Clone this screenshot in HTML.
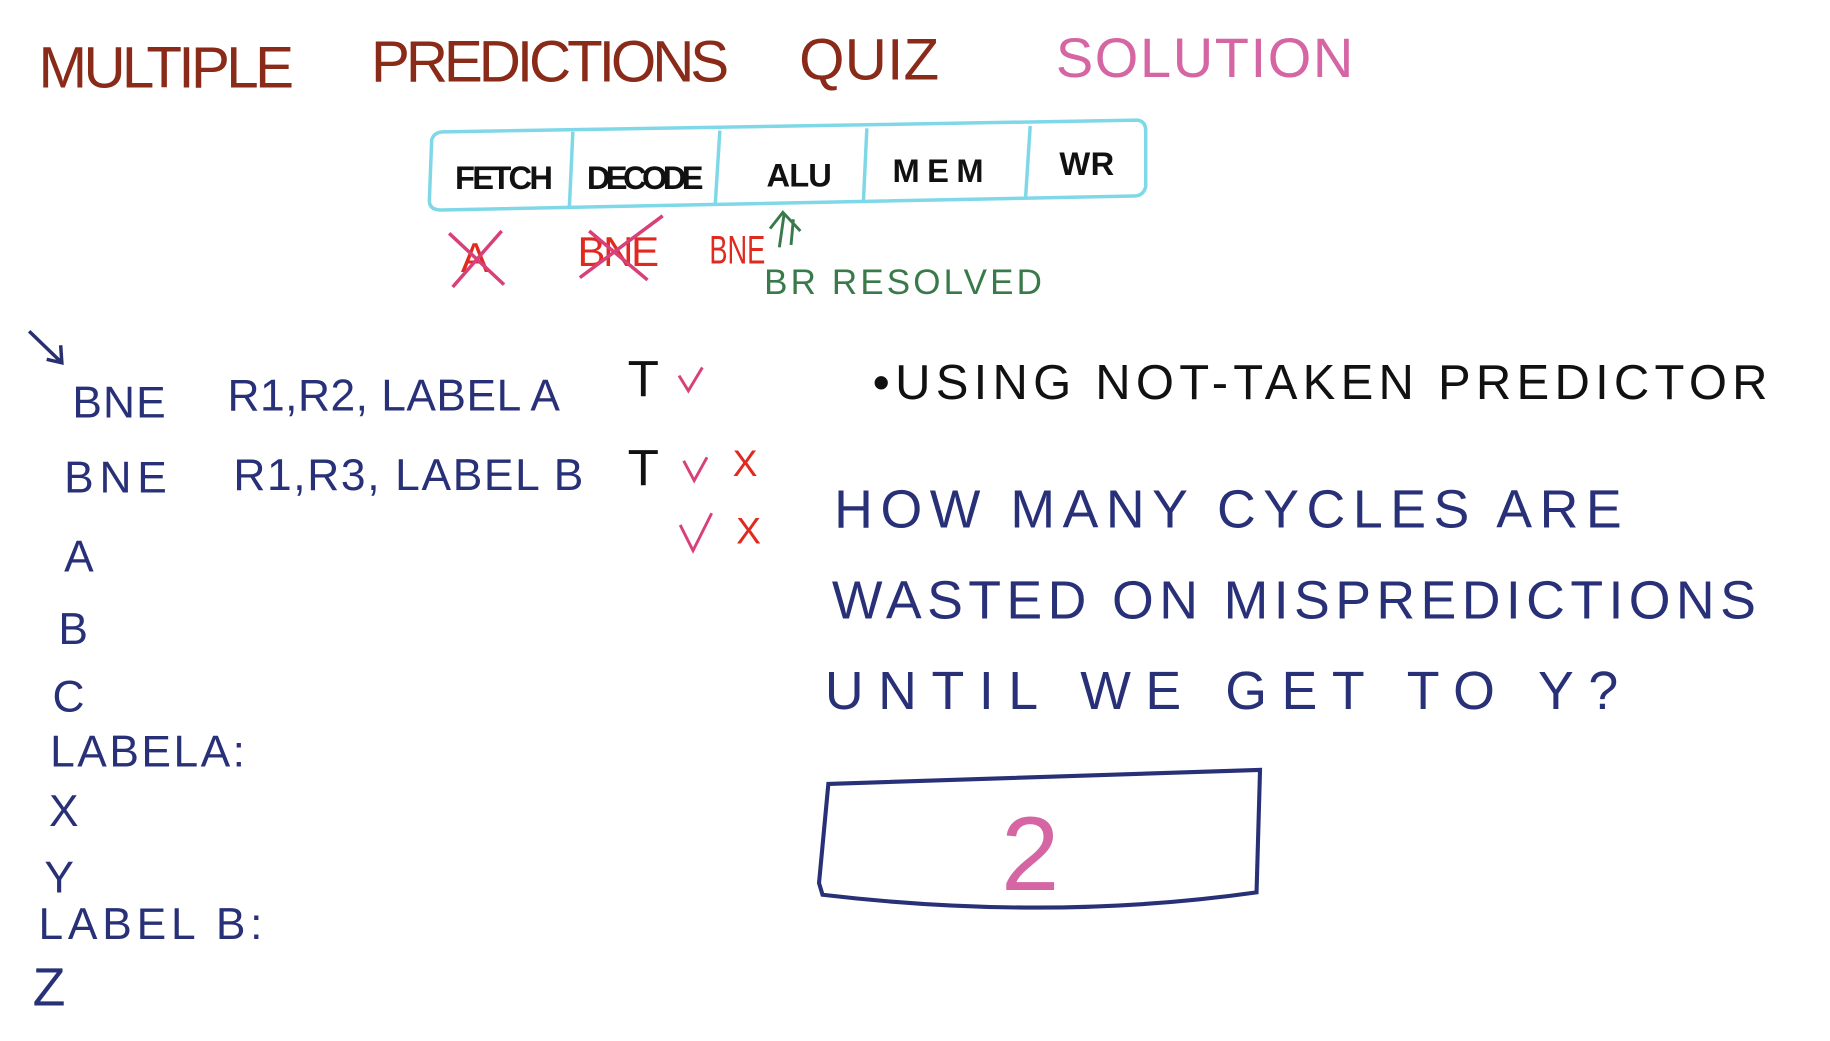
<!DOCTYPE html>
<html><head><meta charset="utf-8"><style>
html,body{margin:0;padding:0;background:#fff;width:1830px;height:1041px;overflow:hidden}
svg{display:block}
text{font-family:"Liberation Sans",sans-serif;}
</style></head><body>
<svg width="1830" height="1041" viewBox="0 0 1545 879" preserveAspectRatio="none" xmlns="http://www.w3.org/2000/svg">
<rect width="1545" height="879" fill="#fff"/>
<g transform="scale(0.985)">
<g fill="#8a2a18" font-size="50">
<text x="33" y="75" textLength="219" lengthAdjust="spacing">MULTIPLE</text>
<text x="318" y="70" textLength="307" lengthAdjust="spacing">PREDICTIONS</text>
<text x="685" y="68" textLength="120" lengthAdjust="spacing">QUIZ</text>
</g>
<text x="905" y="66" font-size="48" fill="#d565a3" textLength="255" lengthAdjust="spacing">SOLUTION</text>
<g fill="none" stroke="#7fd8e8" stroke-width="3">
<path d="M370 120 Q372 113 380 113 L975 103 Q982 104 982 112 L982 160 Q980 168 972 168 L378 180 Q368 180 368 172 Z"/>
<path d="M491 113 L488 178 M617 112 L613 176 M743 110 L740 174 M883 108 L879 170"/>
</g>
<g fill="#111" font-size="28" font-weight="bold">
<text x="390" y="162" textLength="84" lengthAdjust="spacing">FETCH</text>
<text x="503" y="162" textLength="100" lengthAdjust="spacing">DECODE</text>
<text x="657" y="160" textLength="56" lengthAdjust="spacing">ALU</text>
<text x="765" y="156" textLength="78" lengthAdjust="spacing">MEM</text>
<text x="908" y="150" textLength="47" lengthAdjust="spacing">WR</text>
</g>
<g fill="#e02a20" font-size="36">
<text x="395" y="233">A</text>
<text x="495" y="228" textLength="70" lengthAdjust="spacing">BNE</text>
<text x="608" y="226" font-size="34" textLength="48" lengthAdjust="spacingAndGlyphs">BNE</text>
</g>
<g stroke="#d8407a" stroke-width="3" fill="none">
<path d="M385 200 L432 244 M430 198 L388 246 M497 238 L568 185 M505 198 L555 240"/>
</g>
<g stroke="#3a7a4a" stroke-width="2.5" fill="none"><path d="M668 212 L672 184 M660 196 L671 182 L686 198 M678 210 L680 188"/></g>
<text x="655" y="252" fill="#3a7a4a" font-size="30" textLength="238" lengthAdjust="spacing">BR RESOLVED</text>
<g stroke="#283070" stroke-width="3" fill="none"><path d="M25 284 L52 310 M40 308 L53 311 L52 296"/></g>
<g fill="#283078" font-size="38">
<text x="62" y="358" textLength="80" lengthAdjust="spacing">BNE</text>
<text x="195" y="352" textLength="285" lengthAdjust="spacing">R1,R2, LABEL A</text>
<text x="55" y="422" textLength="88" lengthAdjust="spacing">BNE</text>
<text x="200" y="420" textLength="300" lengthAdjust="spacing">R1,R3, LABEL B</text>
<text x="55" y="490">A</text>
<text x="50" y="552">B</text>
<text x="45" y="610">C</text>
<text x="43" y="657" textLength="167" lengthAdjust="spacing">LABELA:</text>
<text x="42" y="708">X</text>
<text x="38" y="765">Y</text>
<text x="33" y="805" textLength="192" lengthAdjust="spacing">LABEL  B:</text>
<text x="28" y="862" font-size="46">Z</text>
</g>
<g fill="#111" font-size="44"><text x="538" y="340">T</text><text x="538" y="416">T</text></g>
<g fill="none" stroke="#d8407a" stroke-width="2.5"><path d="M582 322 L590 335 L602 315 M586 395 L595 412 L606 392 M583 450 L594 472 L610 440"/></g>
<g fill="#e02a20" font-size="32"><text x="628" y="408">X</text><text x="631" y="466">X</text></g>
<g fill="#111" font-size="42">
<text x="748" y="342" textLength="767" lengthAdjust="spacing">•USING NOT-TAKEN PREDICTOR</text>
</g>
<g fill="#283078" font-size="46">
<text x="715" y="452" textLength="675" lengthAdjust="spacing">HOW  MANY  CYCLES  ARE</text>
<text x="713" y="530" textLength="792" lengthAdjust="spacing">WASTED  ON  MISPREDICTIONS</text>
<text x="707" y="608" textLength="680" lengthAdjust="spacing">UNTIL  WE  GET  TO  Y?</text>
</g>
<path d="M710 672 L1080 660 L1077 765 Q900 790 705 767 L702 757 Z" fill="none" stroke="#283078" stroke-width="3.5"/>
<text x="858" y="763" fill="#d565a3" font-size="90">2</text>
</g>
</svg>
</body></html>
